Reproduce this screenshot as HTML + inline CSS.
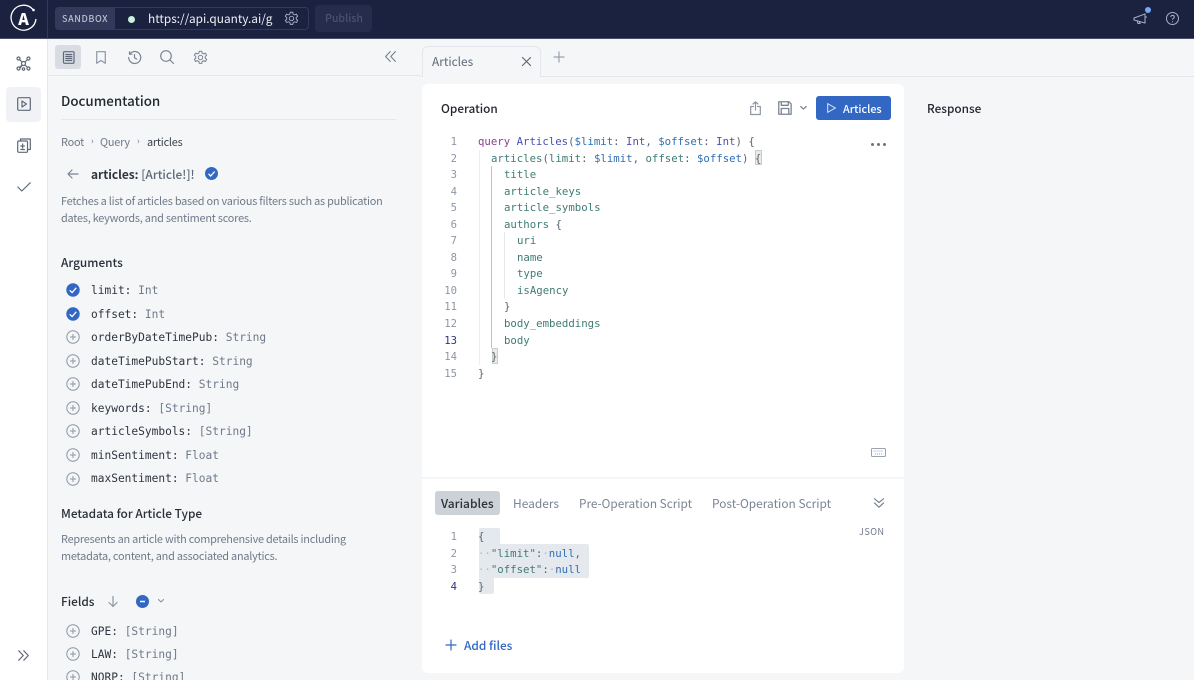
<!DOCTYPE html>
<html><head><meta charset="utf-8"><style>
*{box-sizing:border-box}
html,body{margin:0;padding:0;width:1194px;height:680px;overflow:hidden;background:#f4f6f8}
body{position:relative;font-family:"Noto Sans CJK JP","Liberation Sans",sans-serif;color:#2f353f}
.a{position:absolute}
.t{position:absolute;white-space:nowrap;line-height:16px;font-size:11.9px}
.m{position:absolute;white-space:pre;line-height:16px;font-family:"DejaVu Sans Mono","Liberation Mono",monospace;font-size:10.7px;letter-spacing:0}
.r{font-size:11.2px}
.n{position:absolute;width:20px;text-align:right;left:437px;line-height:16px;font-family:"DejaVu Sans Mono",monospace;font-size:10.6px;color:#8d96a5}
.c{left:478px;color:#3f7c74}
.kw{color:#8a3f8f}.op{color:#4a4fb3}.v{color:#2f6fb5}.p{color:#5a6472}
.ty{color:#6f7a8a}.nm{color:#2f353f}
svg{position:absolute;overflow:visible;fill:none}
.g{stroke:#5f6979;stroke-width:1.2;stroke-linecap:round;stroke-linejoin:round}
.d{color:#6f7a8a;font-size:10.9px;letter-spacing:-.22px}
.h{font-weight:500;font-size:11.85px;color:#2a2f38}
</style></head><body>
<!-- top bar -->
<div class="a" style="left:0;top:0;width:1194px;height:39px;background:#1b2240;border-bottom:1px solid #4a5068"></div>
<div class="a" style="left:47px;top:0;width:1px;height:38px;background:#33395a"></div>
<svg style="left:0;top:0" width="48" height="38"><path d="M33 9.5A12.5 12.5 0 1 0 36 19" stroke="#fff" stroke-width="1.3"/><circle cx="33.5" cy="10" r="1.3" fill="#fff"/></svg>
<div class="t" style="left:15.500px;top:8px;width:16px;text-align:center;color:#fff;font-size:16px;font-weight:900;line-height:20px">A</div>
<div class="a" style="left:55px;top:7px;width:254px;height:23px;border:1px solid #33395a;border-radius:4px"></div>
<div class="a" style="left:55px;top:7px;width:60px;height:23px;background:#33395a;border-radius:4px 0 0 4px"></div>
<div class="t" style="left:62px;top:11px;font-size:9px;letter-spacing:.6px;color:#b8bfd3;font-weight:500">SANDBOX</div>
<div class="a" style="left:128px;top:16px;width:7px;height:7px;border-radius:50%;background:#c9f0e0"></div>
<div class="t" style="left:148px;top:11px;font-size:11.85px;color:#eef0f6">https://api.quanty.ai/g</div>
<svg style="left:284px;top:11px" width="15" height="15" viewBox="0 0 24 24"><path d="M12 8.500a3.500 3.500 0 1 0 0 7 3.500 3.500 0 0 0 0-7zM10 2h4l.6 3 2.400 1.200 2.800-1.200 2 3.400-2.300 2 .1 2.600 2.300 2-2 3.400-2.800-1.200-2.400 1.200-.6 3h-4l-.6-3L7 17.200 4.200 18.400l-2-3.400 2.300-2-.1-2.600-2.300-2 2-3.400L7 6.200 9.400 5z" stroke="#aab1c6" stroke-width="1.500" stroke-linejoin="round"/></svg>
<div class="a" style="left:315px;top:5px;width:57px;height:27px;background:#262d4c;border-radius:4px"></div>
<div class="t" style="left:325px;top:11px;color:#4a5270;font-size:10.6px;font-weight:500">Publish</div>
<svg style="left:1133px;top:12px" width="15" height="14" viewBox="0 0 15 14"><path d="M1 6l11-4v9L1 8zM4 8.500l1 3h2l-.8-2.500M12.500 5h1.500" stroke="#aab1c6" stroke-width="1"/></svg>
<div class="a" style="left:1145px;top:7px;width:6px;height:6px;border-radius:50%;background:#74a9f5"></div>
<svg style="left:1166px;top:12px" width="13" height="13" viewBox="0 0 13 13"><circle cx="6.500" cy="6.500" r="6" stroke="#aab1c6"/><path d="M4.800 5c.1-2.200 3.500-2.200 3.500 0 0 1.300-1.800 1.300-1.800 2.800" stroke="#aab1c6"/><circle cx="6.500" cy="9.800" r=".6" fill="#aab1c6"/></svg>

<!-- left nav -->
<div class="a" style="left:0;top:39px;width:48px;height:641px;background:#fff;border-right:1px solid #e3e6ea"></div>
<svg class="g" style="left:16px;top:56px" width="15" height="15" viewBox="0 0 15 15"><path d="M3 3l9 9M12 3L3 12M7.500 7.500L4 12" /><circle cx="2.500" cy="2.500" r="1.500" fill="#fff"/><circle cx="12.500" cy="2.500" r="1.500" fill="#fff"/><circle cx="2.500" cy="12.500" r="1.500" fill="#fff"/><circle cx="12.500" cy="12.500" r="1.500" fill="#fff"/><circle cx="7.500" cy="7.500" r="2" fill="#fff"/><circle cx="7.500" cy="13" r="1.200" fill="#fff"/></svg>
<div class="a" style="left:6px;top:87px;width:35px;height:35px;background:#f0f2f5;border-radius:4px"></div>
<svg class="g" style="left:17px;top:97px" width="14" height="14" viewBox="0 0 14 14"><rect x=".7" y=".7" width="12.600" height="12.600" rx="1"/><path d="M5 4l4.500 3L5 10z"/></svg>
<svg class="g" style="left:17px;top:138px" width="14" height="15" viewBox="0 0 14 15"><rect x=".7" y="3" width="9.800" height="11.300" rx="1"/><path d="M3.500 3V1h9.800v10.500h-2.800M5.600 6v4M3.800 8h3.600M3.800 11.500h3.600"/></svg>
<svg class="g" style="left:17px;top:182px" width="14" height="10" viewBox="0 0 14 10"><path d="M.8 5l4 4L13.200 .8"/></svg>
<svg class="g" style="left:18px;top:650px" width="11" height="11" viewBox="0 0 11 11"><path d="M.8 .8l4.500 4.700L.8 10.200M5.800 .8l4.500 4.700-4.500 4.700"/></svg>

<!-- docs toolbar -->
<div class="a" style="left:48px;top:75px;width:372px;height:1px;background:#e3e6ea"></div>
<div class="a" style="left:55px;top:45px;width:26px;height:24px;background:#d9dde3;border-radius:3px"></div>
<svg class="g" style="left:62px;top:51px" width="13" height="13" viewBox="0 0 13 13"><rect x="1.500" y=".7" width="10.500" height="11.600" rx="1"/><path d="M3.800 3.500h6M3.800 5.500h6M3.800 7.500h6M3.800 9.500h6"/></svg>
<svg class="g" style="left:96px;top:51px;stroke:#8d96a5" width="10" height="13" viewBox="0 0 10 13"><path d="M.7 .7h8.600v11.600L5 9.500.7 12.300z"/></svg>
<svg class="g" style="left:128px;top:51px;stroke:#7b8493" width="13" height="13" viewBox="0 0 13 13"><path d="M1.800 3A6 6 0 1 1 .7 6.500M1.500 .8V3.200h2.400M6.500 3.500v3.200l2.200 1.400"/></svg>
<svg class="g" style="left:160px;top:50px;stroke:#7b8493" width="14" height="14" viewBox="0 0 14 14"><circle cx="6" cy="6" r="5.300"/><path d="M10 10l3.500 3.500"/></svg>
<svg style="left:193px;top:50px" width="15" height="15" viewBox="0 0 24 24"><path d="M12 8.500a3.500 3.500 0 1 0 0 7 3.500 3.500 0 0 0 0-7zM10 2h4l.6 3 2.400 1.200 2.800-1.200 2 3.400-2.300 2 .1 2.600 2.300 2-2 3.400-2.800-1.200-2.400 1.200-.6 3h-4l-.6-3L7 17.200 4.200 18.400l-2-3.400 2.300-2-.1-2.600-2.300-2 2-3.400L7 6.200 9.400 5z" stroke="#7b8493" stroke-width="1.600" stroke-linejoin="round"/></svg>
<svg class="g" style="left:385px;top:51px;stroke:#7b8493" width="11" height="11" viewBox="0 0 11 11"><path d="M5.200 .6L.6 5.500l4.600 4.900M10.400 .6L5.800 5.500l4.600 4.900"/></svg>

<!-- docs -->
<div class="t" style="left:61px;top:92px;font-size:13.350px;font-weight:500;line-height:18px;color:#23272f">Documentation</div>
<div class="a" style="left:61px;top:119px;width:335px;height:1px;background:#e3e6ea"></div>
<div class="t d" style="left:61px;top:134px">Root</div>
<div class="t d" style="left:91px;top:133px;font-size:9px;letter-spacing:0">›</div>
<div class="t d" style="left:100px;top:134px">Query</div>
<div class="t d" style="left:137px;top:133px;font-size:9px;letter-spacing:0">›</div>
<div class="t d" style="left:147px;top:134px;color:#3c424d">articles</div>
<svg class="g" style="left:67px;top:169px;stroke:#7b8493" width="12" height="10" viewBox="0 0 12 10"><path d="M11 5H1M5 1L1 5l4 4"/></svg>
<div class="t" style="left:91px;top:167px;font-size:11.900px;font-weight:700;color:#2f353f">articles: <span style="color:#5f6979;font-weight:500">[Article!]!</span></div>
<svg style="left:205px;top:167px" width="13" height="13" viewBox="0 0 13 13"><circle cx="6.500" cy="6.500" r="6.500" fill="#3268c4"/><path d="M3.500 6.800l2.200 2.200 4-4.500" stroke="#fff" stroke-width="1.300"/></svg>
<div class="t d" style="left:61px;top:193px">Fetches a list of articles based on various filters such as publication</div>
<div class="t d" style="left:61px;top:210px">dates, keywords, and sentiment scores.</div>
<div class="t h" style="left:61px;top:255px">Arguments</div>

<svg style="left:66px;top:283px" width="14" height="14" viewBox="0 0 14 14"><circle cx="7" cy="7" r="6.700" fill="#3268c4"/><path d="M3.800 7.300l2.300 2.300 4.200-4.800" stroke="#fff" stroke-width="1.300"/></svg>
<div class="m r nm" style="left:91px;top:283px">limit:<span class="ty"> Int</span></div>
<svg style="left:66px;top:307px" width="14" height="14" viewBox="0 0 14 14"><circle cx="7" cy="7" r="6.700" fill="#3268c4"/><path d="M3.800 7.300l2.300 2.300 4.200-4.800" stroke="#fff" stroke-width="1.300"/></svg>
<div class="m r nm" style="left:91px;top:307px">offset:<span class="ty"> Int</span></div>

<svg style="left:66px;top:330px" width="14" height="14" viewBox="0 0 14 14"><circle cx="7" cy="7" r="6.200" stroke="#8d96a5"/><path d="M7 4v6M4 7h6" stroke="#8d96a5"/></svg>
<div class="m r nm" style="left:91px;top:330px">orderByDateTimePub:<span class="ty"> String</span></div>
<svg style="left:66px;top:354px" width="14" height="14" viewBox="0 0 14 14"><circle cx="7" cy="7" r="6.200" stroke="#8d96a5"/><path d="M7 4v6M4 7h6" stroke="#8d96a5"/></svg>
<div class="m r nm" style="left:91px;top:354px">dateTimePubStart:<span class="ty"> String</span></div>
<svg style="left:66px;top:377px" width="14" height="14" viewBox="0 0 14 14"><circle cx="7" cy="7" r="6.200" stroke="#8d96a5"/><path d="M7 4v6M4 7h6" stroke="#8d96a5"/></svg>
<div class="m r nm" style="left:91px;top:377px">dateTimePubEnd:<span class="ty"> String</span></div>
<svg style="left:66px;top:401px" width="14" height="14" viewBox="0 0 14 14"><circle cx="7" cy="7" r="6.200" stroke="#8d96a5"/><path d="M7 4v6M4 7h6" stroke="#8d96a5"/></svg>
<div class="m r nm" style="left:91px;top:401px">keywords:<span class="ty"> [String]</span></div>
<svg style="left:66px;top:424px" width="14" height="14" viewBox="0 0 14 14"><circle cx="7" cy="7" r="6.200" stroke="#8d96a5"/><path d="M7 4v6M4 7h6" stroke="#8d96a5"/></svg>
<div class="m r nm" style="left:91px;top:424px">articleSymbols:<span class="ty"> [String]</span></div>
<svg style="left:66px;top:448px" width="14" height="14" viewBox="0 0 14 14"><circle cx="7" cy="7" r="6.200" stroke="#8d96a5"/><path d="M7 4v6M4 7h6" stroke="#8d96a5"/></svg>
<div class="m r nm" style="left:91px;top:448px">minSentiment:<span class="ty"> Float</span></div>
<svg style="left:66px;top:472px" width="14" height="14" viewBox="0 0 14 14"><circle cx="7" cy="7" r="6.200" stroke="#8d96a5"/><path d="M7 4v6M4 7h6" stroke="#8d96a5"/></svg>
<div class="m r nm" style="left:91px;top:471px">maxSentiment:<span class="ty"> Float</span></div>

<div class="t h" style="left:61px;top:506px">Metadata for Article Type</div>
<div class="t d" style="left:61px;top:531px">Represents an article with comprehensive details including</div>
<div class="t d" style="left:61px;top:548px">metadata, content, and associated analytics.</div>
<div class="t h" style="left:61px;top:594px">Fields</div>
<svg class="g" style="left:108px;top:596px;stroke:#8d96a5" width="10" height="11" viewBox="0 0 10 11"><path d="M5 .5v10M1 6.500l4 4 4-4"/></svg>
<svg style="left:136px;top:595px" width="13" height="13" viewBox="0 0 13 13"><circle cx="6.500" cy="6.500" r="6.500" fill="#3268c4"/><path d="M4 6.500h5" stroke="#fff" stroke-width="1.500"/></svg>
<svg class="g" style="left:158px;top:599px;stroke:#8d96a5" width="6" height="4" viewBox="0 0 6 4"><path d="M.5 .5L3 3 5.500 .5"/></svg>
<svg style="left:66px;top:624px" width="14" height="14" viewBox="0 0 14 14"><circle cx="7" cy="7" r="6.200" stroke="#8d96a5"/><path d="M7 4v6M4 7h6" stroke="#8d96a5"/></svg>
<div class="m r nm" style="left:91px;top:624px">GPE:<span class="ty"> [String]</span></div>
<svg style="left:66px;top:647px" width="14" height="14" viewBox="0 0 14 14"><circle cx="7" cy="7" r="6.200" stroke="#8d96a5"/><path d="M7 4v6M4 7h6" stroke="#8d96a5"/></svg>
<div class="m r nm" style="left:91px;top:647px">LAW:<span class="ty"> [String]</span></div>
<svg style="left:66px;top:670px" width="14" height="14" viewBox="0 0 14 14"><circle cx="7" cy="7" r="6.200" stroke="#8d96a5"/><path d="M7 4v6M4 7h6" stroke="#8d96a5"/></svg>
<div class="m r nm" style="left:91px;top:670px">NORP:<span class="ty"> [String]</span></div>

<!-- tabs -->
<div class="a" style="left:420px;top:76px;width:774px;height:1px;background:#e3e6ea"></div>
<div class="a" style="left:422px;top:46px;width:119px;height:31px;background:#f4f6f8;border:1px solid #e3e6ea;border-bottom:none;border-radius:6px 6px 0 0"></div>
<div class="t" style="left:432px;top:54px;color:#5f6979;font-size:11.900px">Articles</div>
<svg class="g" style="left:522px;top:57px;stroke:#5f6979" width="9" height="9" viewBox="0 0 9 9"><path d="M.5 .5l8 8M8.500 .5l-8 8"/></svg>
<svg class="g" style="left:554px;top:52px;stroke:#9aa2af" width="10" height="10" viewBox="0 0 10 10"><path d="M5 0v10M0 5h10"/></svg>

<!-- card -->
<div class="a" style="left:422px;top:84px;width:482px;height:589px;background:#fff;border-radius:6px"></div>
<div class="a" style="left:422px;top:477px;width:482px;height:2px;background:#f4f6f8"></div>
<div class="t h" style="left:441px;top:101px;color:#23272f;font-size:11.800px">Operation</div>
<div class="t h" style="left:927px;top:101px;color:#23272f;font-size:11.800px">Response</div>
<svg class="g" style="left:750px;top:101px;stroke:#8d96a5" width="11" height="14" viewBox="0 0 11 14"><path d="M5.500 9V1M3 3L5.500 .8 8 3M3.500 5.500H.7v8h9.600v-8H7.500"/></svg>
<svg class="g" style="left:778px;top:101px;stroke:#7b8493" width="14" height="14" viewBox="0 0 13 13"><path d="M.7 .7h9.500l2 2v9.600H.7zM3 .7v3.300h6.500V.7M3 12.300V7h7v5.300"/></svg>
<svg class="g" style="left:800px;top:106px;stroke:#7b8493" width="7" height="4" viewBox="0 0 7 4"><path d="M.7 .5L3.500 3 6.300 .5"/></svg>
<div class="a" style="left:816px;top:96px;width:75px;height:24px;background:#3268c4;border-radius:3px"></div>
<svg style="left:827px;top:103px" width="9" height="10" viewBox="0 0 9 10"><path d="M.7 .7L8.300 5 .7 9.300z" stroke="#dbe6f8"/></svg>
<div class="t" style="left:843px;top:101px;color:#fff;font-size:10.800px;font-weight:500">Articles</div>

<div class="a" style="left:479px;top:150px;width:1px;height:215px;background:#eceef1"></div>
<div class="a" style="left:491px;top:166px;width:1px;height:182px;background:#bcc2ca"></div>
<div class="a" style="left:504px;top:232px;width:1px;height:66px;background:#e3e6ea"></div>
<div class="a" style="left:755px;top:150px;width:7px;height:15px;background:#e8ebe6;border:1px solid #c9ccc7"></div>
<div class="a" style="left:492px;top:348px;width:6px;height:16px;background:#e8ebe6;border:1px solid #c9ccc7"></div>

<div class="n" style="top:134px">1</div><div class="m c" style="top:134px"><span class="kw">query</span> <span class="op">Articles</span><span class="p">(</span><span class="v">$limit</span><span class="p">:</span> <span class="op">Int</span><span class="p">,</span> <span class="v">$offset</span><span class="p">:</span> <span class="op">Int</span><span class="p">) {</span></div>
<div class="n" style="top:151px">2</div><div class="m c" style="left:491px;top:151px">articles<span class="p">(</span>limit<span class="p">:</span> <span class="v">$limit</span><span class="p">,</span> offset<span class="p">:</span> <span class="v">$offset</span><span class="p">) {</span></div>
<div class="n" style="top:167px">3</div><div class="m c" style="left:504px;top:167px">title</div>
<div class="n" style="top:184px">4</div><div class="m c" style="left:504px;top:184px">article_keys</div>
<div class="n" style="top:200px">5</div><div class="m c" style="left:504px;top:200px">article_symbols</div>
<div class="n" style="top:217px">6</div><div class="m c" style="left:504px;top:217px">authors <span class="p">{</span></div>
<div class="n" style="top:233px">7</div><div class="m c" style="left:517px;top:233px">uri</div>
<div class="n" style="top:250px">8</div><div class="m c" style="left:517px;top:250px">name</div>
<div class="n" style="top:266px">9</div><div class="m c" style="left:517px;top:266px">type</div>
<div class="n" style="top:283px">10</div><div class="m c" style="left:517px;top:283px">isAgency</div>
<div class="n" style="top:299px">11</div><div class="m p" style="left:504px;top:299px">}</div>
<div class="n" style="top:316px">12</div><div class="m c" style="left:504px;top:316px">body_embeddings</div>
<div class="n" style="top:333px;color:#2b3580">13</div><div class="m c" style="left:504px;top:333px">body</div>
<div class="n" style="top:349px">14</div><div class="m p" style="left:491px;top:349px">}</div>
<div class="n" style="top:366px">15</div><div class="m p" style="left:478px;top:366px">}</div>
<div class="a" style="left:871px;top:143px;width:3px;height:3px;border-radius:50%;background:#6b7482;box-shadow:6px 0 #6b7482,12px 0 #6b7482"></div>
<svg style="left:871px;top:448px" width="15" height="9" viewBox="0 0 15 9"><rect x=".5" y=".5" width="14" height="8" rx="1" stroke="#9aa2af"/><path d="M2.500 3h10M4 6h7" stroke="#9aa2af" stroke-dasharray="1 1"/></svg>

<!-- variables -->
<div class="a" style="left:435px;top:491px;width:65px;height:24px;background:#cdd1d8;border-radius:3px"></div>
<div class="t" style="left:441px;top:496px;font-size:12px;font-weight:500;color:#2a2f38">Variables</div>
<div class="t" style="left:513px;top:496px;font-size:11.950px;color:#7b8493">Headers</div>
<div class="t" style="left:579px;top:496px;font-size:11.800px;color:#7b8493">Pre-Operation Script</div>
<div class="t" style="left:712px;top:496px;font-size:11.900px;color:#7b8493">Post-Operation Script</div>
<svg class="g" style="left:874px;top:498px;stroke:#7b8493" width="10" height="10" viewBox="0 0 10 10"><path d="M.5 .8L5 4.500 9.500 .8M.5 5L5 9.200 9.500 5"/></svg>
<div class="t" style="left:859px;top:523px;font-size:9.200px;letter-spacing:.4px;color:#6f7a8a">JSON</div>
<div class="a" style="left:479px;top:528px;width:21px;height:17px;background:#e5e9ed;border-radius:2px"></div>
<div class="a" style="left:479px;top:544px;width:110px;height:34px;background:#e5e9ed;border-radius:2px"></div>
<div class="a" style="left:479px;top:577px;width:15px;height:17px;background:#e5e9ed;border-radius:2px"></div>
<div class="n" style="top:529px">1</div><div class="m p" style="left:478px;top:529px">{</div>
<div class="n" style="top:546px">2</div><div class="m c" style="left:478px;top:546px"><span style="color:#b4bac3">··</span>"limit"<span class="p">:</span><span style="color:#b4bac3">·</span><span class="v">null</span><span class="p">,</span></div>
<div class="n" style="top:562px">3</div><div class="m c" style="left:478px;top:562px"><span style="color:#b4bac3">··</span>"offset"<span class="p">:</span><span style="color:#b4bac3">·</span><span class="v">null</span></div>
<div class="n" style="top:579px;color:#2b3580">4</div><div class="m p" style="left:478px;top:579px">}</div>
<svg class="g" style="left:446px;top:640px;stroke:#3268c4" width="10" height="10" viewBox="0 0 10 10"><path d="M5 0v10M0 5h10"/></svg>
<div class="t" style="left:464px;top:638px;font-size:11.850px;font-weight:500;color:#3268c4">Add files</div>
</body></html>
